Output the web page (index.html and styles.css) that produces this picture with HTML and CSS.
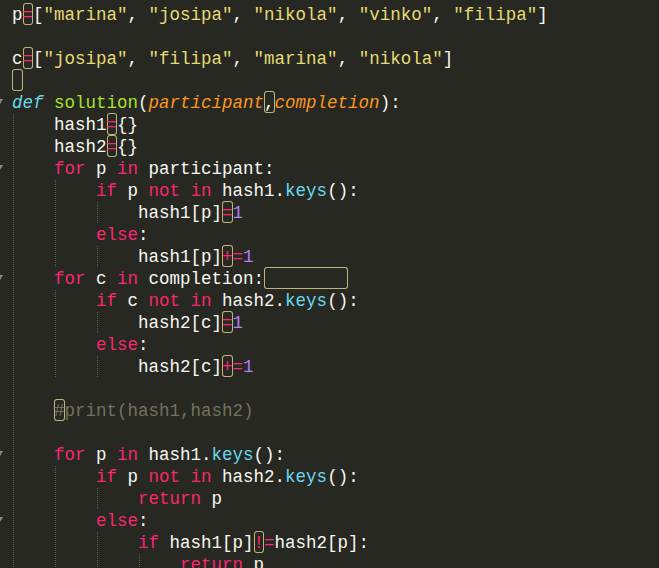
FILE: index.html
```html
<!DOCTYPE html>
<html>
<head>
<meta charset="utf-8">
<link rel="stylesheet" href="styles.css">
</head>
<body>
<div class="editor">
<div class="line"><span class="t">p</span><span class="box k">=</span>[<span class="s">"marina"</span>, <span class="s">"josipa"</span>, <span class="s">"nikola"</span>, <span class="s">"vinko"</span>, <span class="s">"filipa"</span>]</div>
<div class="line"> </div>
<div class="line"><span class="t">c</span><span class="box k">=</span>[<span class="s">"josipa"</span>, <span class="s">"filipa"</span>, <span class="s">"marina"</span>, <span class="s">"nikola"</span>]</div>
<div class="line"><span class="box"> </span></div>
<div class="line fold"><span class="d">def</span> <span class="f">solution</span>(<span class="a">participant</span><span class="box">,</span><span class="a">completion</span>):</div>
<div class="line g1">    hash1<span class="box k">=</span>{}</div>
<div class="line g1">    hash2<span class="box k">=</span>{}</div>
<div class="line g1 fold">    <span class="k">for</span> p <span class="k">in</span> participant:</div>
<div class="line g2">        <span class="k">if</span> p <span class="k">not</span> <span class="k">in</span> hash1.<span class="m">keys</span>():</div>
<div class="line g3">            hash1[p]<span class="box k">=</span><span class="n">1</span></div>
<div class="line g2">        <span class="k">else</span>:</div>
<div class="line g3">            hash1[p]<span class="box k">+</span><span class="k">=</span><span class="n">1</span></div>
<div class="line g1 fold">    <span class="k">for</span> c <span class="k">in</span> completion:<span class="box">        </span></div>
<div class="line g2">        <span class="k">if</span> c <span class="k">not</span> <span class="k">in</span> hash2.<span class="m">keys</span>():</div>
<div class="line g3">            hash2[c]<span class="box k">=</span><span class="n">1</span></div>
<div class="line g2">        <span class="k">else</span>:</div>
<div class="line g3">            hash2[c]<span class="box k">+</span><span class="k">=</span><span class="n">1</span></div>
<div class="line g1"> </div>
<div class="line g1">    <span class="box c">#</span><span class="c">print(hash1,hash2)</span></div>
<div class="line g1"> </div>
<div class="line g1 fold">    <span class="k">for</span> p <span class="k">in</span> hash1.<span class="m">keys</span>():</div>
<div class="line g2">        <span class="k">if</span> p <span class="k">not</span> <span class="k">in</span> hash2.<span class="m">keys</span>():</div>
<div class="line g3">            <span class="k">return</span> p</div>
<div class="line g2 fold">        <span class="k">else</span>:</div>
<div class="line g3">            <span class="k">if</span> hash1[p]<span class="box k">!</span><span class="k">=</span>hash2[p]:</div>
<div class="line g4">                <span class="k">return</span> p</div>
</div>
</body>
</html>
```

FILE: styles.css
```css
html, body {
  margin: 0;
  padding: 0;
  background: #272822;
  overflow: hidden;
}

.editor {
  padding: 4px 0 0 12px;
  font-family: "Liberation Mono", "DejaVu Sans Mono", monospace;
  font-size: 17.5px;
  line-height: 22px;
  color: #f8f8f2;
}

.line {
  position: relative;
  height: 22px;
  margin-left: -12px;
  padding-left: 12px;
  white-space: pre;
  background-repeat: no-repeat;
}

.g1 {
  background-image: repeating-linear-gradient(to bottom, #5c5d55 0 1px, transparent 1px 2px);
  background-size: 1px 100%;
  background-position: 13px 0;
}

.g2 {
  background-image:
    repeating-linear-gradient(to bottom, #5c5d55 0 1px, transparent 1px 2px),
    repeating-linear-gradient(to bottom, #5c5d55 0 1px, transparent 1px 2px);
  background-size: 1px 100%, 1px 100%;
  background-position: 13px 0, 55px 0;
}

.g3 {
  background-image:
    repeating-linear-gradient(to bottom, #5c5d55 0 1px, transparent 1px 2px),
    repeating-linear-gradient(to bottom, #5c5d55 0 1px, transparent 1px 2px),
    repeating-linear-gradient(to bottom, #5c5d55 0 1px, transparent 1px 2px);
  background-size: 1px 100%, 1px 100%, 1px 100%;
  background-position: 13px 0, 55px 0, 97px 0;
}

.g4 {
  background-image:
    repeating-linear-gradient(to bottom, #5c5d55 0 1px, transparent 1px 2px),
    repeating-linear-gradient(to bottom, #5c5d55 0 1px, transparent 1px 2px),
    repeating-linear-gradient(to bottom, #5c5d55 0 1px, transparent 1px 2px),
    repeating-linear-gradient(to bottom, #5c5d55 0 1px, transparent 1px 2px);
  background-size: 1px 100%, 1px 100%, 1px 100%, 1px 100%;
  background-position: 13px 0, 55px 0, 97px 0, 139px 0;
}

.fold::before {
  content: "";
  position: absolute;
  left: -3px;
  top: 7px;
  border-left: 3px solid transparent;
  border-right: 3px solid transparent;
  border-top: 5px solid #8a8b84;
}

.box {
  padding: 2px 0 0;
  border-radius: 3px;
  box-shadow: inset 0 0 0 1px #bdb57d;
}

.k { color: #f92672; }
.s { color: #e6db74; }
.d { color: #66d9ef; font-style: italic; }
.f { color: #a6e22e; }
.a { color: #fd971f; font-style: italic; }
.m { color: #66d9ef; }
.n { color: #ae81ff; }
.c { color: #75715e; }
.t { color: #f8f8f2; }
```
